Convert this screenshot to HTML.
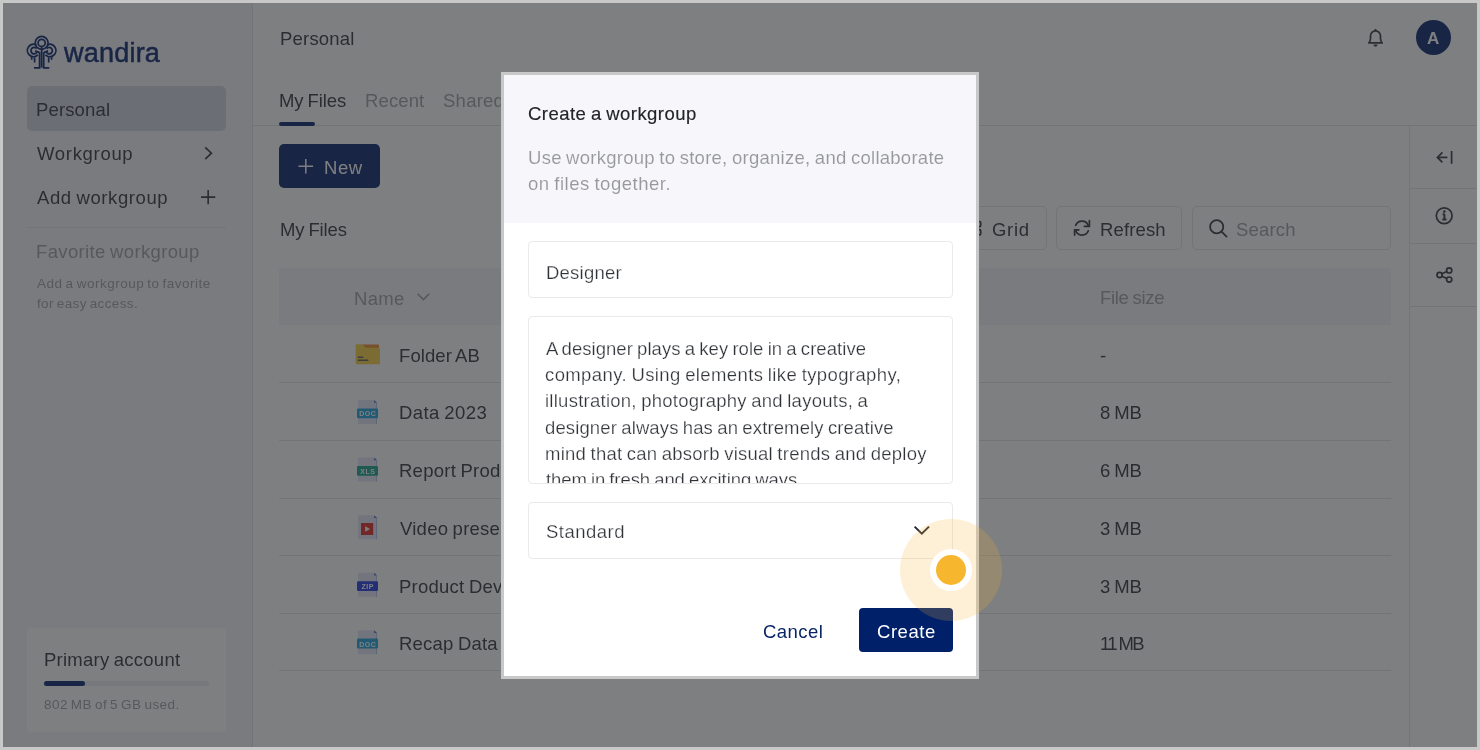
<!DOCTYPE html>
<html><head><meta charset="utf-8">
<style>
*{box-sizing:border-box;margin:0;padding:0}
html,body{width:1480px;height:750px;overflow:hidden;background:#c8c8c8}
body{position:relative;font-family:"Liberation Sans",sans-serif;color:#333}
.a{position:absolute}
svg{position:absolute;overflow:visible;will-change:transform}
.t{position:absolute;white-space:nowrap;will-change:transform;font-family:"Liberation Sans",sans-serif}
#app{position:absolute;left:0;top:0;width:1480px;height:750px;background:#fff}
#overlay{position:absolute;left:0;top:0;width:1480px;height:750px;background:rgba(40,42,45,0.6)}
.hl{position:absolute;height:1px;background:#e2e5e4}
.vl{position:absolute;width:1px;background:#e2e5e4}
.btn{position:absolute;border:1px solid #e1e5e2;border-radius:5px;background:#fff}
.fpage{position:absolute;width:19px;height:24px;background:#e3e8f5}
</style></head><body>
<div id="app">
  <!-- sidebar -->
  <div class="a" style="left:0;top:0;width:252px;height:750px;background:#f5f6fa"></div>
  <div class="vl" style="left:252px;top:0;height:750px"></div>
  <svg style="left:0;top:0" width="70" height="80" viewBox="0 0 70 80">
    <g fill="none" stroke="#00206a" stroke-width="1.75">
      <circle cx="41.65" cy="42.9" r="6.45"/>
      <circle cx="41.65" cy="42.9" r="3.55"/>
      <g id="lg">
        <path d="M37.9 54.9 A6.2 6.2 0 1 1 36.4 44.9"/>
        <path d="M36.9 52.3 A3.2 3.2 0 1 1 36.6 48.6"/>
        <path d="M35.2 50.9 L39.6 52.6"/>
        <path d="M39.6 52.3 V67.9 H34"/>
        <path d="M31.7 57 V59.8 M34.6 57.3 V62.6"/>
      </g>
      <use href="#lg" transform="translate(83.3 0) scale(-1 1)"/>
      <path d="M41.65 46.5 V67.6"/>
    </g>
  </svg>
  <div class="a" style="left:27px;top:86px;width:199px;height:44.5px;border-radius:5px;background:#d0d6e2"></div>
  <svg style="left:0;top:0" width="1" height="1"><path d="M205.2 147.3 L211.4 153.2 L205.2 159.1" fill="none" stroke="#2f3237" stroke-width="1.7"/></svg>
  <svg style="left:0;top:0" width="1" height="1"><path d="M201 197.1 H215.3 M208.15 190 V204.2" fill="none" stroke="#2f3237" stroke-width="1.6"/></svg>
  <div class="hl" style="left:27px;top:227px;width:199px"></div>
  <div class="a" style="left:27px;top:628px;width:199px;height:104px;border-radius:4px;background:#ffffff"></div>
  <div class="a" style="left:44px;top:681px;width:165px;height:5px;border-radius:3px;background:#eceef1"></div>
  <div class="a" style="left:44px;top:681px;width:41px;height:5px;border-radius:3px;background:#00206a"></div>

  <!-- header -->
  <svg style="left:0;top:0" width="1" height="1"><g fill="none" stroke="#2f3237" stroke-width="1.7" stroke-linejoin="round"><path d="M1368.8 42.9 H1382.2 Q1380.5 41.3 1380.5 38.6 V35.9 A5 5 0 0 0 1370.5 35.9 V38.6 Q1370.5 41.3 1368.8 42.9 Z"/><path d="M1375.5 29 V30.9"/></g><path d="M1373.4 44.6 A2.1 2.1 0 0 0 1377.6 44.6 Z" fill="#2f3237"/></svg>
  <div class="a" style="left:1415.6px;top:19.8px;width:35.4px;height:35.4px;border-radius:50%;background:#00206a"></div>
  <div class="hl" style="left:252px;top:125px;width:1228px"></div>
  <div class="a" style="left:279px;top:122px;width:36px;height:4px;border-radius:2px;background:#00206a"></div>
  <div class="a" style="left:279px;top:144px;width:101px;height:44px;border-radius:5px;background:#00206a"></div>
  <svg style="left:0;top:0" width="1" height="1"><path d="M298.5 166.2 H313.1 M305.8 159 V173.4" fill="none" stroke="#fff" stroke-width="1.5"/></svg>

  <!-- toolbar -->
  <div class="btn" style="left:960px;top:206px;width:87px;height:44px"></div>
  <div class="btn" style="left:1056px;top:206px;width:126px;height:44px"></div>
  <div class="btn" style="left:1192px;top:206px;width:199px;height:44px"></div>
  <svg style="left:0;top:0" width="1" height="1"><g fill="none" stroke="#2f3237" stroke-width="1.7"><rect x="967" y="221.5" width="5.5" height="5.2" rx="1.2"/><rect x="975.2" y="221.5" width="5.5" height="5.2" rx="1.2"/><rect x="967" y="229.7" width="5.5" height="5.2" rx="1.2"/><rect x="975.2" y="229.7" width="5.5" height="5.2" rx="1.2"/></g></svg>
  <svg style="left:0;top:0" width="1" height="1"><g fill="none" stroke="#2f3237" stroke-width="1.75" stroke-linecap="round" stroke-linejoin="round"><path d="M1075.7 225.3 A6.7 6.7 0 0 1 1088.3 225.6"/><path d="M1089.4 220.7 V226.4 H1084.4"/><path d="M1088.3 230.8 A6.7 6.7 0 0 1 1075.7 230.5"/><path d="M1074.6 235.1 V229.8 H1078.8"/></g></svg>
  <svg style="left:0;top:0" width="1" height="1"><g fill="none" stroke="#2f3237" stroke-width="1.8"><circle cx="1216.7" cy="226.7" r="6.6"/><path d="M1221.5 231.6 L1226.6 236.6" stroke-linecap="round"/></g></svg>

  <!-- table -->
  <div class="a" style="left:279px;top:268px;width:1112px;height:57px;background:#f5f6fa"></div>
  <svg style="left:0;top:0" width="1" height="1"><path d="M417.6 293.8 L423.4 299.6 L429.2 293.8" fill="none" stroke="#9c9ea3" stroke-width="1.6"/></svg>
  <div class="hl" style="left:279px;top:382px;width:1112px"></div>
  <div class="hl" style="left:279px;top:440px;width:1112px"></div>
  <div class="hl" style="left:279px;top:498px;width:1112px"></div>
  <div class="hl" style="left:279px;top:555px;width:1112px"></div>
  <div class="hl" style="left:279px;top:613px;width:1112px"></div>
  <div class="hl" style="left:279px;top:670px;width:1112px"></div>

  <!-- file icons -->
  <svg style="left:0;top:0" width="1" height="1">
    <path d="M362 344.6 H377.8 Q379 344.6 379 346 V348 H362 Z" fill="#f08a24"/>
    <path d="M356.8 344.3 H362.2 L365.8 347.8 H378.6 Q380 347.8 380 349.2 V363 Q380 364.2 378.6 364.2 H357 Q355.6 364.2 355.6 363 V345.6 Q355.6 344.3 356.8 344.3 Z" fill="#f6cf3c"/>
    <path d="M358.3 357.2 H362.8 M358.3 360.2 H367.8" stroke="#5a5a5a" stroke-width="1.4" stroke-linecap="round"/>
  </svg>
  <!-- doc icons generic -->
  <svg style="left:0;top:0" width="1" height="1">
    <g id="pg1"><path d="M358 400 H374.2 L377 402.8 V424 H358 Z" fill="#e1e7f6"/><path d="M374.2 400 L377 402.8 H374.2 Z" fill="#4c63c9"/><path d="M376.2 402.8 H377 V424 H376.2 Z" fill="#a9b6e6"/></g>
    <rect x="357" y="408.4" width="21" height="9.8" rx="1.2" fill="#1aa3dc"/>
    <text x="367.8" y="416.4" font-size="7" font-weight="700" letter-spacing="0.5" text-anchor="middle" fill="#fff" font-family="Liberation Sans">DOC</text>
  </svg>
  <svg style="left:0;top:0" width="1" height="1">
    <path d="M358 457.5 H374.2 L377 460.3 V481.5 H358 Z" fill="#e1e7f6"/><path d="M374.2 457.5 L377 460.3 H374.2 Z" fill="#4c63c9"/><path d="M376.2 460.3 H377 V481.5 H376.2 Z" fill="#a9b6e6"/>
    <rect x="357" y="466" width="21" height="9.8" rx="1.2" fill="#10a38a"/>
    <text x="367.8" y="474.0" font-size="7" font-weight="700" letter-spacing="0.5" text-anchor="middle" fill="#fff" font-family="Liberation Sans">XLS</text>
  </svg>
  <svg style="left:0;top:0" width="1" height="1">
    <path d="M358 515.2 H374.2 L377 518 V539.2 H358 Z" fill="#e1e7f6"/><path d="M374.2 515.2 L377 518 H374.2 Z" fill="#4c63c9"/><path d="M376.2 518 H377 V539.2 H376.2 Z" fill="#a9b6e6"/>
    <rect x="361" y="523" width="12.2" height="12" fill="#e0261f"/>
    <path d="M365.2 526.3 L370 529 L365.2 531.7 Z" fill="#fff"/>
  </svg>
  <svg style="left:0;top:0" width="1" height="1">
    <path d="M358 572.8 H374.2 L377 575.6 V596.8 H358 Z" fill="#e1e7f6"/><path d="M374.2 572.8 L377 575.6 H374.2 Z" fill="#4c63c9"/><path d="M376.2 575.6 H377 V596.8 H376.2 Z" fill="#a9b6e6"/>
    <rect x="357" y="581.2" width="21" height="9.8" rx="1.2" fill="#1f35e0"/>
    <text x="367.8" y="589.2" font-size="7" font-weight="700" letter-spacing="0.5" text-anchor="middle" fill="#fff" font-family="Liberation Sans">ZIP</text>
  </svg>
  <svg style="left:0;top:0" width="1" height="1">
    <path d="M358 630.2 H374.2 L377 633 V654.2 H358 Z" fill="#e1e7f6"/><path d="M374.2 630.2 L377 633 H374.2 Z" fill="#4c63c9"/><path d="M376.2 633 H377 V654.2 H376.2 Z" fill="#a9b6e6"/>
    <rect x="357" y="638.6" width="21" height="9.8" rx="1.2" fill="#1aa3dc"/>
    <text x="367.8" y="646.6" font-size="7" font-weight="700" letter-spacing="0.5" text-anchor="middle" fill="#fff" font-family="Liberation Sans">DOC</text>
  </svg>

  <!-- right panel -->
  <div class="vl" style="left:1409px;top:125px;height:625px"></div>
  <div class="hl" style="left:1410px;top:188px;width:70px"></div>
  <div class="hl" style="left:1410px;top:243px;width:70px"></div>
  <div class="hl" style="left:1410px;top:306px;width:70px"></div>
  <svg style="left:0;top:0" width="1" height="1"><g fill="none" stroke="#2f3237" stroke-width="1.7"><path d="M1451.6 151 V163.8"/><path d="M1447.4 157.4 H1437.5"/><path d="M1442.4 152.4 L1437.4 157.4 L1442.4 162.4"/></g></svg>
  <svg style="left:0;top:0" width="1" height="1"><g fill="none" stroke="#2f3237" stroke-width="1.7"><circle cx="1444.2" cy="215.8" r="7.9"/><path d="M1444.4 214.3 V219.3 M1442.3 219.4 H1446.5 M1442.6 214.3 H1444.6" stroke-width="2"/></g><circle cx="1444.3" cy="211.6" r="1.3" fill="#2f3237"/></svg>
  <svg style="left:0;top:0" width="1" height="1"><g fill="none" stroke="#2f3237" stroke-width="1.7"><circle cx="1439.6" cy="275" r="2.6"/><circle cx="1449.2" cy="270.4" r="2.6"/><circle cx="1449.2" cy="279.6" r="2.6"/><path d="M1442 273.8 L1446.8 271.6 M1442 276.2 L1446.8 278.4"/></g></svg>

<div class="t" style="left:64.10px;top:39.70px;font-size:27px;line-height:27px;font-weight:400;color:#00206a;letter-spacing:0.217px;word-spacing:-1.0px;-webkit-text-stroke:0.5px #00206a;">wandira</div>
<div class="t" style="left:35.70px;top:101.30px;font-size:18.5px;line-height:18.5px;font-weight:400;color:#2f3237;letter-spacing:0.143px;word-spacing:-1.0px;">Personal</div>
<div class="t" style="left:36.70px;top:144.80px;font-size:18.5px;line-height:18.5px;font-weight:400;color:#2f3237;letter-spacing:0.688px;word-spacing:-1.0px;">Workgroup</div>
<div class="t" style="left:36.50px;top:189.40px;font-size:18.5px;line-height:18.5px;font-weight:400;color:#2f3237;letter-spacing:0.600px;word-spacing:-1.0px;">Add workgroup</div>
<div class="t" style="left:35.60px;top:242.80px;font-size:18.5px;line-height:18.5px;font-weight:400;color:#9c9ea3;letter-spacing:0.347px;word-spacing:-1.0px;">Favorite workgroup</div>
<div class="t" style="left:36.50px;top:276.70px;font-size:13.5px;line-height:13.5px;font-weight:400;color:#9c9ea3;letter-spacing:0.500px;word-spacing:-1.2px;word-spacing:-1.2px;">Add a workgroup to favorite</div>
<div class="t" style="left:36.50px;top:296.60px;font-size:13.5px;line-height:13.5px;font-weight:400;color:#9c9ea3;letter-spacing:0.367px;word-spacing:-1.2px;word-spacing:-1.2px;">for easy access.</div>
<div class="t" style="left:44.10px;top:651.40px;font-size:18.5px;line-height:18.5px;font-weight:400;color:#2f3237;letter-spacing:0.243px;word-spacing:-1.0px;">Primary account</div>
<div class="t" style="left:44.10px;top:698.40px;font-size:13.5px;line-height:13.5px;font-weight:400;color:#9c9ea3;letter-spacing:0.442px;word-spacing:-1.2px;word-spacing:-1.2px;">802 MB of 5 GB used.</div>
<div class="t" style="left:279.50px;top:30.30px;font-size:18.5px;line-height:18.5px;font-weight:400;color:#2f3237;letter-spacing:0.200px;word-spacing:-1.0px;">Personal</div>
<div class="t" style="left:279.20px;top:92.40px;font-size:18.5px;line-height:18.5px;font-weight:400;color:#2f3237;letter-spacing:-0.100px;word-spacing:-1.0px;">My Files</div>
<div class="t" style="left:364.90px;top:92.40px;font-size:18.5px;line-height:18.5px;font-weight:400;color:#9c9ea3;letter-spacing:0.120px;word-spacing:-1.0px;">Recent</div>
<div class="t" style="left:443.30px;top:92.40px;font-size:18.5px;line-height:18.5px;font-weight:400;color:#9c9ea3;letter-spacing:0.250px;word-spacing:-1.0px;">Shared</div>
<div class="t" style="left:324.10px;top:158.80px;font-size:18.5px;line-height:18.5px;font-weight:400;color:#ffffff;letter-spacing:0.600px;word-spacing:-1.0px;">New</div>
<div class="t" style="left:279.50px;top:220.80px;font-size:18.5px;line-height:18.5px;font-weight:400;color:#2f3237;letter-spacing:-0.129px;word-spacing:-1.0px;">My Files</div>
<div class="t" style="left:991.50px;top:220.80px;font-size:18.5px;line-height:18.5px;font-weight:400;color:#2f3237;letter-spacing:0.733px;word-spacing:-1.0px;">Grid</div>
<div class="t" style="left:1100.10px;top:220.80px;font-size:18.5px;line-height:18.5px;font-weight:400;color:#2f3237;letter-spacing:0.133px;word-spacing:-1.0px;">Refresh</div>
<div class="t" style="left:1236.40px;top:220.80px;font-size:18.5px;line-height:18.5px;font-weight:400;color:#9c9ea3;letter-spacing:0.160px;word-spacing:-1.0px;">Search</div>
<div class="t" style="left:354.40px;top:289.80px;font-size:18.5px;line-height:18.5px;font-weight:400;color:#9c9ea3;letter-spacing:0.300px;word-spacing:-1.0px;">Name</div>
<div class="t" style="left:1099.90px;top:289.40px;font-size:18.5px;line-height:18.5px;font-weight:400;color:#9c9ea3;letter-spacing:-0.300px;word-spacing:-1.0px;">File size</div>
<div class="t" style="left:398.90px;top:347.10px;font-size:18.5px;line-height:18.5px;font-weight:400;color:#2f3237;letter-spacing:0.075px;word-spacing:-1.0px;">Folder AB</div>
<div class="t" style="left:398.90px;top:404.40px;font-size:18.5px;line-height:18.5px;font-weight:400;color:#2f3237;letter-spacing:0.412px;word-spacing:-1.0px;">Data 2023</div>
<div class="t" style="left:398.90px;top:462.10px;font-size:18.5px;line-height:18.5px;font-weight:400;color:#2f3237;letter-spacing:0.250px;word-spacing:-1.0px;">Report Product</div>
<div class="t" style="left:399.90px;top:519.80px;font-size:18.5px;line-height:18.5px;font-weight:400;color:#2f3237;letter-spacing:0.250px;word-spacing:-1.0px;">Video presentation</div>
<div class="t" style="left:398.90px;top:577.60px;font-size:18.5px;line-height:18.5px;font-weight:400;color:#2f3237;letter-spacing:0.250px;word-spacing:-1.0px;">Product Development</div>
<div class="t" style="left:398.90px;top:635.30px;font-size:18.5px;line-height:18.5px;font-weight:400;color:#2f3237;letter-spacing:0.214px;word-spacing:-1.0px;">Recap Data Team</div>
<div class="t" style="left:1100.10px;top:347.10px;font-size:18.5px;line-height:18.5px;font-weight:400;color:#2f3237;letter-spacing:0.000px;word-spacing:-1.0px;">-</div>
<div class="t" style="left:1099.90px;top:404.40px;font-size:18.5px;line-height:18.5px;font-weight:400;color:#2f3237;letter-spacing:-0.133px;word-spacing:-1.0px;">8 MB</div>
<div class="t" style="left:1099.90px;top:462.10px;font-size:18.5px;line-height:18.5px;font-weight:400;color:#2f3237;letter-spacing:-0.133px;word-spacing:-1.0px;">6 MB</div>
<div class="t" style="left:1099.90px;top:519.80px;font-size:18.5px;line-height:18.5px;font-weight:400;color:#2f3237;letter-spacing:-0.133px;word-spacing:-1.0px;">3 MB</div>
<div class="t" style="left:1099.90px;top:577.60px;font-size:18.5px;line-height:18.5px;font-weight:400;color:#2f3237;letter-spacing:-0.133px;word-spacing:-1.0px;">3 MB</div>
<div class="t" style="left:1099.90px;top:635.30px;font-size:18.5px;line-height:18.5px;font-weight:400;color:#2f3237;letter-spacing:-1.625px;word-spacing:-1.0px;">11 MB</div>
<div class="t" style="left:1427.00px;top:30.00px;font-size:17px;line-height:17px;font-weight:700;color:#ffffff;letter-spacing:0.000px;word-spacing:-1.0px;">A</div>
</div>
<div id="overlay"></div>

<!-- modal -->
<div class="a" style="left:501px;top:72px;width:478px;height:607px;border:3px solid #c8c8c8;background:#fff"></div>
<div class="a" style="left:504px;top:75px;width:472px;height:147.6px;background:#f6f6fb"></div>
<div class="a" style="left:528px;top:240.5px;width:425px;height:57.5px;border:1px solid #eaeaeb;border-radius:4px"></div>
<div class="a" style="left:528px;top:316px;width:425px;height:168px;border:1px solid #eaeaeb;border-radius:4px"></div>
<div class="a" style="left:528px;top:502px;width:425px;height:57px;border:1px solid #eaeaeb;border-radius:4px"></div>
<svg style="left:0;top:0" width="1" height="1"><path d="M914.6 526.6 L921.8 533.6 L929 526.6" fill="none" stroke="#2a2c30" stroke-width="2"/></svg>
<div class="a" style="left:858.7px;top:608.2px;width:94px;height:44px;border-radius:4px;background:#00206a"></div>
<div class="t" style="left:527.50px;top:104.50px;font-size:18.5px;line-height:18.5px;font-weight:400;color:#222428;letter-spacing:0.459px;word-spacing:-1.0px;-webkit-text-stroke:0.15px #222428;">Create a workgroup</div>
<div class="t" style="left:527.50px;top:148.80px;font-size:18.5px;line-height:18.5px;font-weight:400;color:#96989d;letter-spacing:0.267px;word-spacing:-1.0px;-webkit-text-stroke:0.1px #f6f6fb;">Use workgroup to store, organize, and collaborate</div>
<div class="t" style="left:527.50px;top:174.90px;font-size:18.5px;line-height:18.5px;font-weight:400;color:#96989d;letter-spacing:0.518px;word-spacing:-1.0px;-webkit-text-stroke:0.1px #f6f6fb;">on files together.</div>
<div class="t" style="left:545.60px;top:264.10px;font-size:18.5px;line-height:18.5px;font-weight:400;color:#2f3237;letter-spacing:0.229px;word-spacing:-1.0px;-webkit-text-stroke:0.25px #fff;">Designer</div>
<div class="t" style="left:545.50px;top:523.30px;font-size:18.5px;line-height:18.5px;font-weight:400;color:#2f3237;letter-spacing:0.486px;word-spacing:-1.0px;-webkit-text-stroke:0.25px #fff;">Standard</div>
<div class="t" style="left:763.30px;top:622.80px;font-size:18.5px;line-height:18.5px;font-weight:400;color:#0a2566;letter-spacing:0.460px;word-spacing:-1.0px;">Cancel</div>
<div class="t" style="left:876.80px;top:622.80px;font-size:18.5px;line-height:18.5px;font-weight:400;color:#ffffff;letter-spacing:0.540px;word-spacing:-1.0px;">Create</div>
<div class="a" style="left:0;top:0;width:1480px;height:750px;clip-path:inset(317px 528px 267px 528px)">
<div class="t" style="left:545.70px;top:339.80px;font-size:18.5px;line-height:18.5px;font-weight:400;color:#2f3237;letter-spacing:0.050px;word-spacing:-1.0px;-webkit-text-stroke:0.25px #fff;">A designer plays a key role in a creative</div>
<div class="t" style="left:544.90px;top:366.10px;font-size:18.5px;line-height:18.5px;font-weight:400;color:#2f3237;letter-spacing:0.385px;word-spacing:-1.0px;-webkit-text-stroke:0.25px #fff;">company. Using elements like typography,</div>
<div class="t" style="left:544.90px;top:392.40px;font-size:18.5px;line-height:18.5px;font-weight:400;color:#2f3237;letter-spacing:0.256px;word-spacing:-1.0px;-webkit-text-stroke:0.25px #fff;">illustration, photography and layouts, a</div>
<div class="t" style="left:544.90px;top:418.80px;font-size:18.5px;line-height:18.5px;font-weight:400;color:#2f3237;letter-spacing:0.125px;word-spacing:-1.0px;-webkit-text-stroke:0.25px #fff;">designer always has an extremely creative</div>
<div class="t" style="left:544.90px;top:445.00px;font-size:18.5px;line-height:18.5px;font-weight:400;color:#2f3237;letter-spacing:0.250px;word-spacing:-1.0px;-webkit-text-stroke:0.25px #fff;">mind that can absorb visual trends and deploy</div>
<div class="t" style="left:545.90px;top:471.30px;font-size:18.5px;line-height:18.5px;font-weight:400;color:#2f3237;letter-spacing:-0.065px;word-spacing:-1.0px;-webkit-text-stroke:0.25px #fff;">them in fresh and exciting ways.</div>
</div>

<!-- highlight -->
<div class="a" style="left:900px;top:519px;width:102px;height:102px;border-radius:50%;background:rgba(246,182,49,0.2)"></div>
<div class="a" style="left:930.2px;top:549.2px;width:41.6px;height:41.6px;border-radius:50%;background:#fff"></div>
<div class="a" style="left:936px;top:555px;width:30px;height:30px;border-radius:50%;background:#f6b72f"></div>

<!-- frame -->
<div class="a" style="left:0;top:0;width:1480px;height:750px;border:3px solid #c8c8c8"></div>
</body></html>
